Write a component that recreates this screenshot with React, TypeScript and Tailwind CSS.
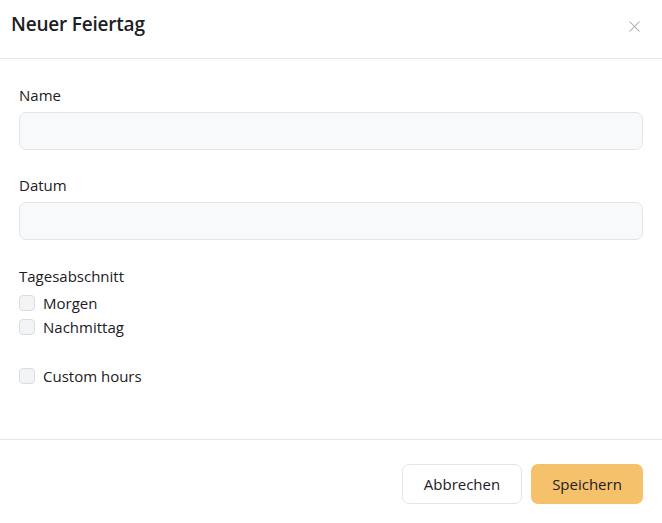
import { X } from 'lucide-react';

export default function App() {
  return (
    <div className="w-[662px] h-[523px] bg-white text-[#1c2024] font-['Open_Sans','Noto_Sans',sans-serif]">
      {/* header */}
      <div className="flex items-center justify-between h-[59px] pl-[11px] pr-[18px] border-b border-[#e5e7eb]">
        <h2 className="text-[19px] font-semibold tracking-[-0.2px] -mt-[10px]">Neuer Feiertag</h2>
        <button className="text-[#a0a6ae] -mt-[6px]">
          <X size={19} strokeWidth={1.3} />
        </button>
      </div>

      {/* body */}
      <div className="px-[19px] pt-[26px] h-[380px]">
        <label className="block text-[15px] leading-[20px] mb-[7px]">Name</label>
        <input className="block w-full h-[38px] rounded-[7px] border border-[#e3e5e8] bg-[#f8f9fa]" />

        <label className="block text-[15px] leading-[20px] mt-[25px] mb-[7px]">Datum</label>
        <input className="block w-full h-[38px] rounded-[7px] border border-[#e3e5e8] bg-[#f8f9fa]" />

        <label className="block text-[15px] leading-[20px] mt-[26px] mb-[7px]">Tagesabschnitt</label>
        <div className="flex flex-col gap-[4px]">
          {['Morgen', 'Nachmittag'].map(l => (
            <label key={l} className="flex items-center gap-[8px] text-[15px] leading-[20px]">
              <span className="w-[16px] h-[16px] rounded-[4px] border border-[#d9dce0] bg-[#f3f4f6]" />
              {l}
            </label>
          ))}
        </div>
        <label className="flex items-center gap-[8px] text-[15px] leading-[20px] mt-[29px]">
          <span className="w-[16px] h-[16px] rounded-[4px] border border-[#d9dce0] bg-[#f3f4f6]" />
          Custom hours
        </label>
      </div>

      {/* footer */}
      <div className="border-t border-[#e5e7eb] flex justify-end gap-[9px] px-[19px] pt-[24px]">
        <button className="h-[40px] w-[120px] rounded-[7px] border border-[#e3e5e8] bg-white text-[15px]">Abbrechen</button>
        <button className="h-[40px] w-[112px] rounded-[7px] bg-[#f5c16b] text-[15px]">Speichern</button>
      </div>
    </div>
  );
}
